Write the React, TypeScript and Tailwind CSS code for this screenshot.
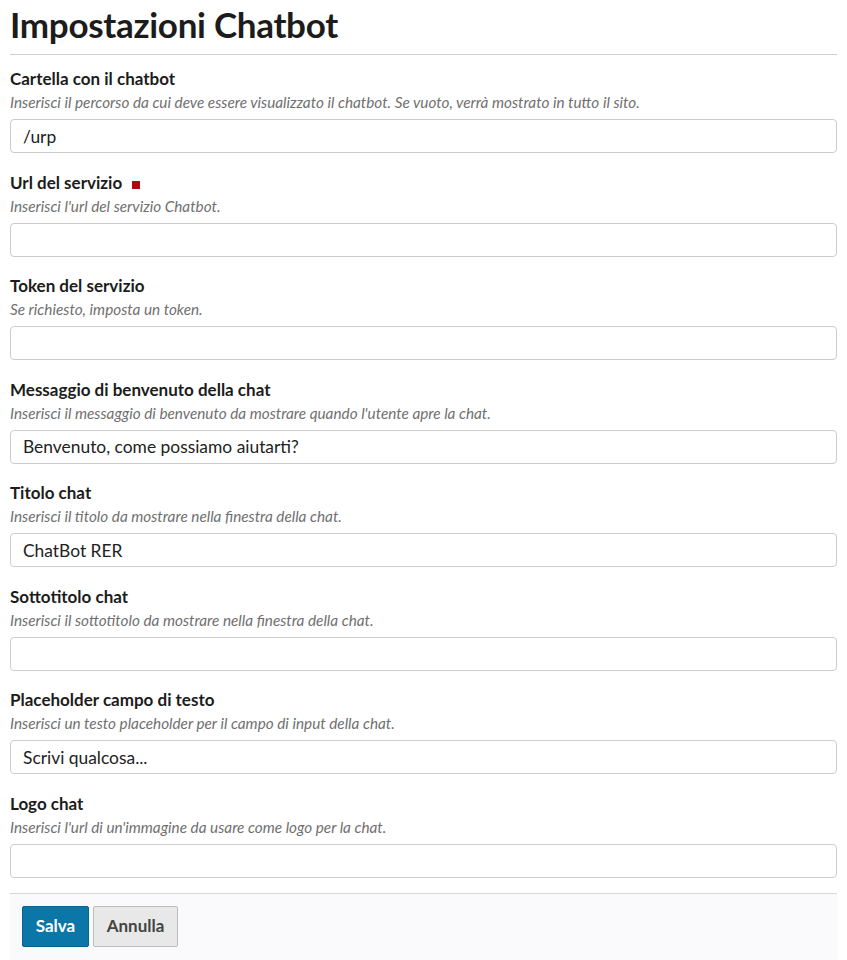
const fields = [
  {
    label: "Cartella con il chatbot",
    help: "Inserisci il percorso da cui deve essere visualizzato il chatbot. Se vuoto, verrà mostrato in tutto il sito.",
    value: "/urp",
  },
  {
    label: "Url del servizio",
    help: "Inserisci l'url del servizio Chatbot.",
    value: "",
    required: true,
  },
  {
    label: "Token del servizio",
    help: "Se richiesto, imposta un token.",
    value: "",
  },
  {
    label: "Messaggio di benvenuto della chat",
    help: "Inserisci il messaggio di benvenuto da mostrare quando l'utente apre la chat.",
    value: "Benvenuto, come possiamo aiutarti?",
  },
  {
    label: "Titolo chat",
    help: "Inserisci il titolo da mostrare nella finestra della chat.",
    value: "ChatBot RER",
  },
  {
    label: "Sottotitolo chat",
    help: "Inserisci il sottotitolo da mostrare nella finestra della chat.",
    value: "",
  },
  {
    label: "Placeholder campo di testo",
    help: "Inserisci un testo placeholder per il campo di input della chat.",
    value: "Scrivi qualcosa...",
  },
  {
    label: "Logo chat",
    help: "Inserisci l'url di un'immagine da usare come logo per la chat.",
    value: "",
  },
];

const App = () => {
  return (
    <div className="w-full min-h-screen bg-white px-[10px] font-['Lato',sans-serif] text-[#1c1c1c]">
      <h1 className="h-[54px] text-[35px] font-bold leading-[46px] pt-[1px] tracking-[-0.3px]">
        Impostazioni Chatbot
      </h1>
      <div className="border-t border-[#cfcfcf] pt-[13px]">
        {fields.map((field) => (
          <FieldRow key={field.label} field={field} />
        ))}
      </div>
      <div className="-mt-[4px] border-t border-[#d6d6d6] bg-[#fafafc] h-[67px] px-[12px] pt-[12px] flex gap-[4px]">
        <button className="h-[41px] w-[67px] bg-[#0a77a8] border border-[#07628c] text-white font-bold text-[17px] rounded-[2px]">
          Salva
        </button>
        <button className="h-[41px] w-[85px] bg-[#e8e8e8] border border-[#bdbdbd] text-[#444] font-bold text-[17px] rounded-[2px]">
          Annulla
        </button>
      </div>
    </div>
  );
};

export default App;

const FieldRow = ({
  field,
}: {
  field: { label: string; help: string; value: string; required?: boolean };
}) => {
  const { label, help, value, required } = field;
  return (
    <div className="pb-[18.57px]">
      <div className="h-[22px] flex items-center text-[17px] font-bold leading-[22px]">
        {label}
        {required && (
          <span className="ml-[10px] mt-[4px] inline-block w-[8px] h-[8px] bg-[#a50e0e]" />
        )}
      </div>
      <div className="mt-[2px] h-[20px] text-[15.3px] italic leading-[20px] text-[#707070]">
        {help}
      </div>
      <input
        readOnly
        value={value}
        className="mt-[7px] block w-full h-[34px] border border-[#cccccc] rounded-[4px] px-[12px] text-[17.4px] text-[#222] outline-none font-['Lato',sans-serif]"
      />
    </div>
  );
};
